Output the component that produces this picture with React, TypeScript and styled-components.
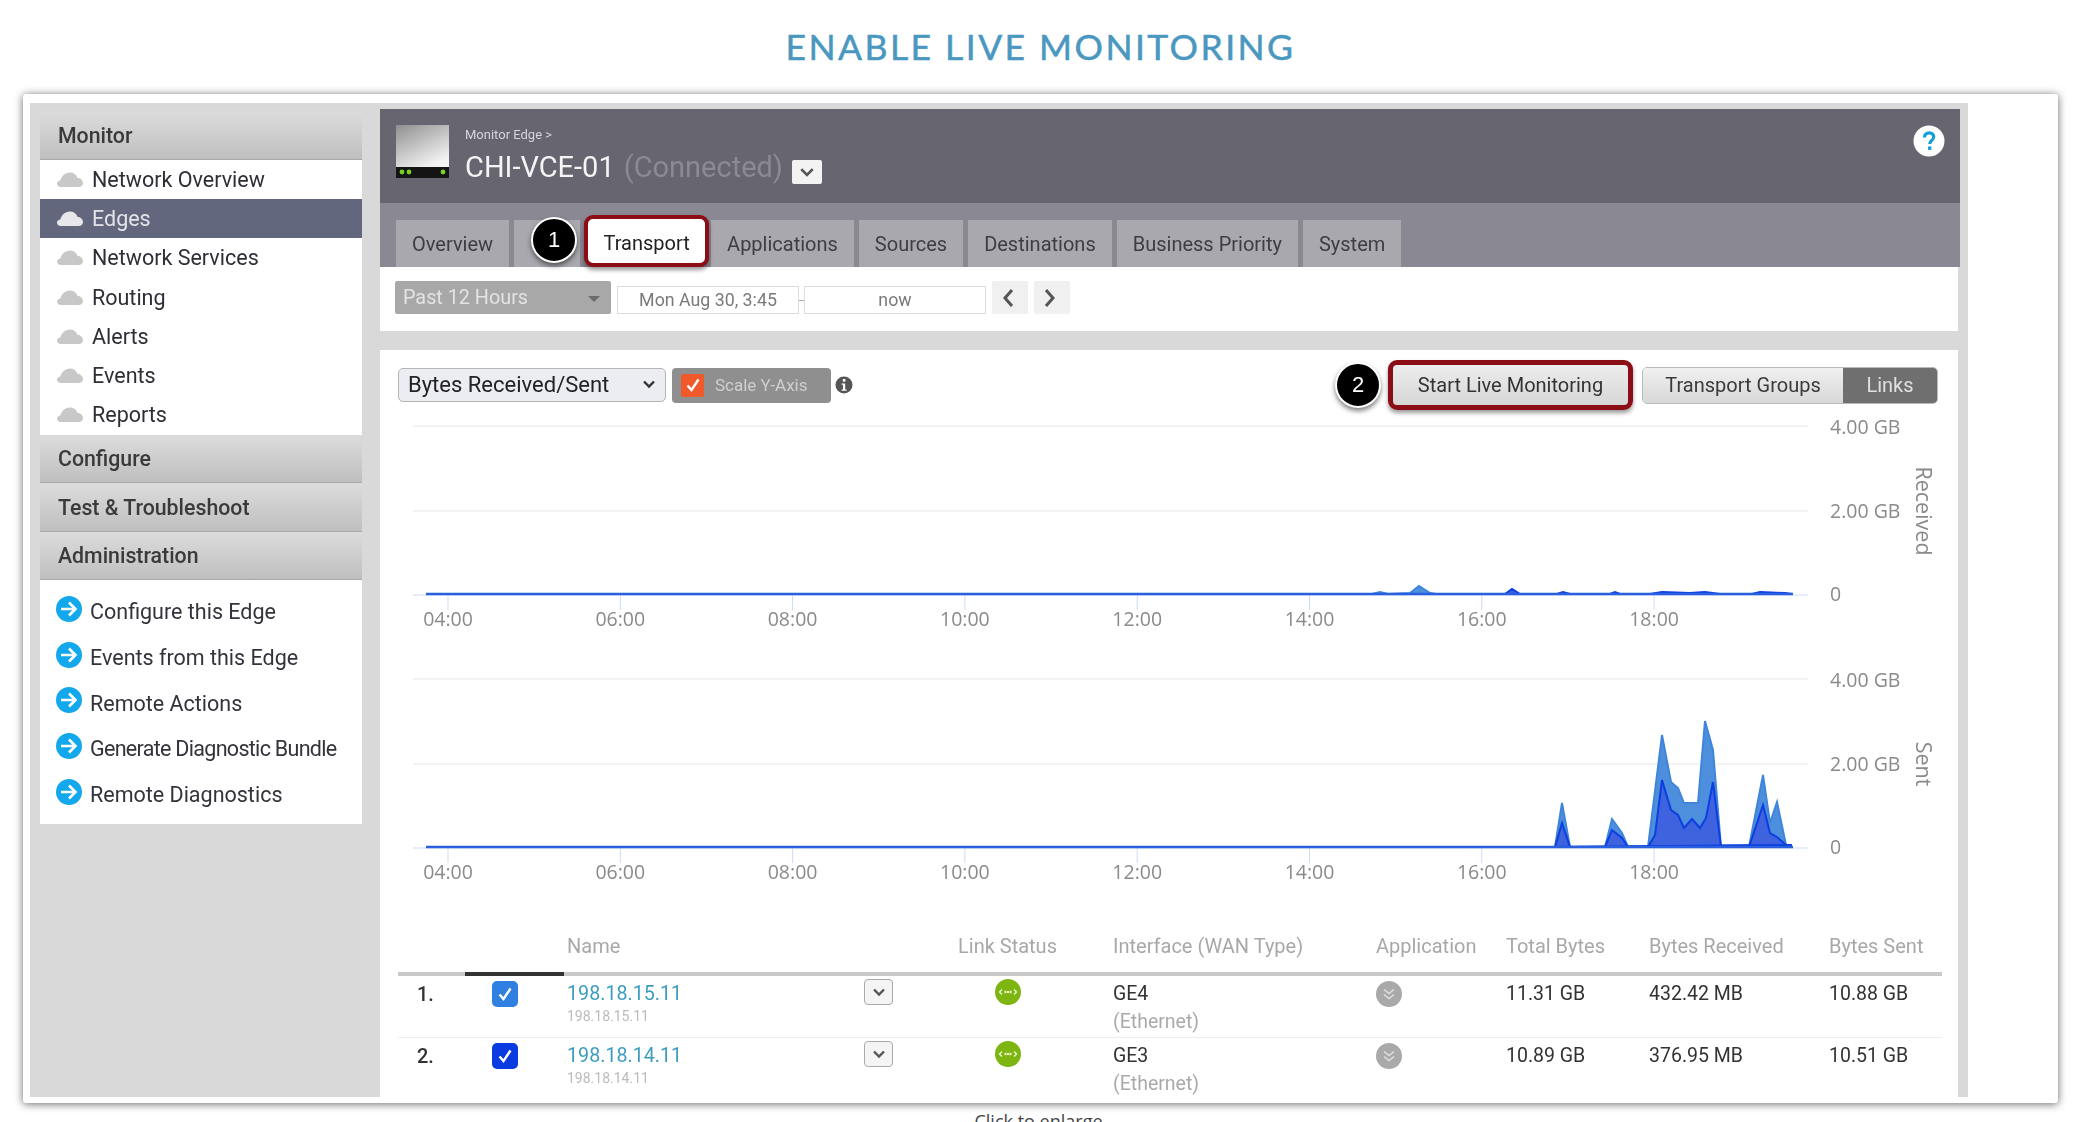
import styled, { createGlobalStyle } from "styled-components";

const GlobalStyle = createGlobalStyle`
  html, body {
    margin: 0;
    padding: 0;
    background: #ffffff;
  }
  * {
    box-sizing: border-box;
  }
`;

const monitorItems = ["Network Overview", "Edges", "Network Services", "Routing", "Alerts", "Events", "Reports"];
const adminLinks = ["Configure this Edge", "Events from this Edge", "Remote Actions", "Generate Diagnostic Bundle", "Remote Diagnostics"];
const tabs = ["Applications", "Sources", "Destinations", "Business Priority", "System"];
const hours = ["04:00", "06:00", "08:00", "10:00", "12:00", "14:00", "16:00", "18:00"];

const rows = [
  { no: "1.", ip: "198.18.15.11", iface: "GE4", total: "11.31 GB", received: "432.42 MB", sent: "10.88 GB", box: "#2f80e0" },
  { no: "2.", ip: "198.18.14.11", iface: "GE3", total: "10.89 GB", received: "376.95 MB", sent: "10.51 GB", box: "#0a3be0" },
];

// points read off the reference, as page coordinates
const sentLight: [number, number][] = [
  [1555, 847], [1562, 803], [1570, 847], [1605, 847], [1612, 819], [1622, 833], [1628, 847], [1648, 847],
  [1662, 735], [1671, 782], [1678, 788], [1684, 803], [1698, 803], [1705, 721], [1713, 750], [1721, 847],
  [1749, 847], [1763, 775], [1770, 823], [1777, 802], [1786, 845], [1792, 845],
];
const sentDark: [number, number][] = [
  [1555, 847], [1562, 823], [1570, 847], [1605, 847], [1612, 830], [1622, 838], [1628, 847], [1648, 847],
  [1655, 835], [1662, 780], [1671, 810], [1678, 815], [1684, 828], [1692, 819], [1700, 828], [1706, 818],
  [1713, 782], [1721, 847], [1749, 847], [1763, 805], [1770, 833], [1777, 837], [1786, 845], [1792, 845],
];
const receivedLight: [number, number][] = [
  [1372, 594], [1380, 592], [1388, 594], [1410, 593], [1419, 586], [1430, 593], [1436, 594], [1792, 594],
];
const receivedDark: [number, number][] = [
  [1505, 594], [1512, 589], [1520, 594], [1557, 594], [1563, 592], [1570, 594], [1610, 594], [1615, 592],
  [1620, 594], [1650, 594], [1662, 592], [1690, 593], [1705, 592], [1720, 594], [1752, 594], [1760, 592],
  [1785, 593], [1792, 594],
];

const toPoints = (pts: [number, number][]) => pts.map((p) => p.join(",")).join(" ");

function AreaChart(props: {
  top: number;
  height: number;
  lines: number[];
  base: number;
  label: string;
  light: [number, number][];
  dark: [number, number][];
}) {
  const { top, height, lines, base, label, light, dark } = props;
  const mid = lines[1];
  return (
    <ChartSvg width={1540} height={height} viewBox={`398 ${top} 1540 ${height}`}>
      {lines.map((y) => (
        <line key={y} x1={413} x2={1808} y1={y} y2={y} stroke="#efefef" strokeWidth={1.5} />
      ))}
      <line x1={413} x2={1808} y1={base + 1} y2={base + 1} stroke="#cfdcf5" strokeWidth={1} />
      {hours.map((h, i) => {
        const x = 448 + i * 172.3;
        return (
          <g key={h}>
            <line x1={x} x2={x} y1={base} y2={base + 16} stroke="#cddbf3" strokeWidth={1} />
            <text x={x} y={base + 32} textAnchor="middle" fontSize={19.5} fill="#8a8a8a">{h}</text>
          </g>
        );
      })}
      <text x={1830} y={lines[0] + 8} fontSize={19.5} fill="#8a8a8a">4.00 GB</text>
      <text x={1830} y={lines[1] + 7} fontSize={19.5} fill="#8a8a8a">2.00 GB</text>
      <text x={1830} y={base + 7} fontSize={19.5} fill="#8a8a8a">0</text>
      <text
        x={1916}
        y={mid}
        textAnchor="middle"
        fontSize={21.5}
        fill="#8a8a8a"
        transform={`rotate(90 1916 ${mid})`}
      >
        {label}
      </text>
      <polygon points={toPoints(light)} fill="#4d8fdc" stroke="#3f86da" strokeWidth={2} />
      <polygon points={toPoints(dark)} fill="#3f62de" stroke="#0b3fe0" strokeWidth={2} />
      <line x1={426} x2={1793} y1={base} y2={base} stroke="#2a5fe0" strokeWidth={2.5} />
    </ChartSvg>
  );
}

const CloudIcon = ({ color }: { color: string }) => (
  <svg width="26" height="15" viewBox="0 0 26 15">
    <path
      fill={color}
      d="M4 15C1.6 15 0 13.5 0 11.8 0 10 1.5 8.8 3.4 8.6 4 4.6 8 0.5 13 0.5c3.6 0 6.4 2 7.4 5.2 3 .3 5.6 2.4 5.6 5.2 0 2.4-2 4.1-4.4 4.1z"
    />
  </svg>
);

const ArrowCircle = () => (
  <svg width="26" height="26" viewBox="0 0 26 26">
    <circle cx="13" cy="13" r="13" fill="#13a8ec" />
    <path d="M5 13h14M13 6.5l6.5 6.5-6.5 6.5" fill="none" stroke="#ffffff" strokeWidth="2.6" />
  </svg>
);

const Chevron = ({ color = "#444", size = 14 }: { color?: string; size?: number }) => (
  <svg width={size} height={size} viewBox="0 0 14 14">
    <path d="M2 4.5l5 5 5-5" fill="none" stroke={color} strokeWidth="2.4" />
  </svg>
);

const CheckMark = ({ size = 18 }: { size?: number }) => (
  <svg width={size} height={size} viewBox="0 0 18 18">
    <path d="M3.5 9.5l4 4.5 7-10.5" fill="none" stroke="#ffffff" strokeWidth="2.4" />
  </svg>
);

const EdgeIcon = () => (
  <svg width="53" height="53" viewBox="0 0 53 53">
    <defs>
      <linearGradient id="edgeBody" x1="0" y1="0" x2="0.6" y2="1">
        <stop offset="0" stopColor="#8f8f8f" />
        <stop offset="1" stopColor="#f2f2f2" />
      </linearGradient>
    </defs>
    <rect width="53" height="42" fill="url(#edgeBody)" />
    <rect y="42" width="53" height="11" fill="#141414" />
    <circle cx="6" cy="47" r="2.4" fill="#76d321" />
    <circle cx="13" cy="47" r="2.4" fill="#76d321" />
    <circle cx="47" cy="47" r="2.4" fill="#76d321" />
  </svg>
);

const HelpIcon = () => (
  <svg width="32" height="32" viewBox="0 0 32 32">
    <circle cx="16" cy="16" r="15.5" fill="#ffffff" />
    <path
      d="M11.5 12.5c0-3 2-4.7 4.7-4.7s4.5 1.7 4.5 4.1c0 3.6-4 3.6-4 7"
      fill="none"
      stroke="#13a0d8"
      strokeWidth="3.2"
    />
    <rect x="15" y="21.5" width="3.4" height="3.4" fill="#13a0d8" />
  </svg>
);

const StatusIcon = () => (
  <svg width="26" height="26" viewBox="0 0 26 26">
    <circle cx="13" cy="13" r="13" fill="#7fb512" />
    <path d="M7 10.5L4.5 13 7 15.5M19 10.5l2.5 2.5-2.5 2.5" fill="none" stroke="#e8f5c8" strokeWidth="1.4" />
    <circle cx="10.5" cy="13" r="1.2" fill="#e8f5c8" />
    <circle cx="13" cy="13" r="1.2" fill="#e8f5c8" />
    <circle cx="15.5" cy="13" r="1.2" fill="#e8f5c8" />
  </svg>
);

const AppIcon = () => (
  <svg width="26" height="26" viewBox="0 0 26 26">
    <circle cx="13" cy="13" r="13" fill="#a9a9a9" />
    <path d="M8 8.5l5 4 5-4M8 13.5l5 4 5-4" fill="none" stroke="#e0e0e0" strokeWidth="1.6" />
  </svg>
);

const InfoIcon = () => (
  <svg width="18" height="18" viewBox="0 0 18 18">
    <circle cx="9" cy="9" r="8.5" fill="#555" />
    <rect x="7.8" y="3" width="2.6" height="2.6" fill="#fff" />
    <path d="M6.6 7.4h3.6v6h1.4v1.4H6.6v-1.4h1.4V8.8H6.6z" fill="#fff" />
  </svg>
);

export default function App() {
  return (
    <Page>
      <GlobalStyle />
      <Title>ENABLE LIVE MONITORING</Title>
      <Frame>
        <Shot>
          <Sidebar>
            <SideHead>Monitor</SideHead>
            <SideList>
              {monitorItems.map((item) => (
                <SideItem key={item} $active={item === "Edges"}>
                  <CloudIcon color={item === "Edges" ? "#e8e8ec" : "#c8c8c8"} />
                  {item}
                </SideItem>
              ))}
            </SideList>
            <SideHead>Configure</SideHead>
            <SideHead>Test &amp; Troubleshoot</SideHead>
            <SideHead>Administration</SideHead>
            <AdminList>
              {adminLinks.map((link) => (
                <AdminLink key={link} $tight={link.length > 22}>
                  <ArrowCircle />
                  <span>{link}</span>
                </AdminLink>
              ))}
            </AdminList>
          </Sidebar>

          <Main>
            <Header>
              <EdgeIcon />
              <HeaderText>
                <Crumb>Monitor Edge &gt;</Crumb>
                <EdgeName>
                  CHI-VCE-01 <Connected>(Connected)</Connected>
                  <HeaderDrop><Chevron color="#555" size={16} /></HeaderDrop>
                </EdgeName>
              </HeaderText>
              <HelpSlot><HelpIcon /></HelpSlot>
            </Header>

            <TabBar>
              <Tab>Overview</Tab>
              <BlankTab><Badge $left={17} $top={-3}>1</Badge></BlankTab>
              <ActiveTab>Transport</ActiveTab>
              {tabs.map((tab) => (
                <Tab key={tab}>{tab}</Tab>
              ))}
            </TabBar>

            <TimeBar>
              <RangeSelect>
                Past 12 Hours
                <SelectCaret />
              </RangeSelect>
              <DateField>Mon Aug 30, 3:45</DateField>
              <DateDash />
              <DateField>now</DateField>
              <NavButton>
                <svg width="14" height="20" viewBox="0 0 14 20"><path d="M11 2L4 10l7 8" fill="none" stroke="#555" strokeWidth="3" /></svg>
              </NavButton>
              <NavButton>
                <svg width="14" height="20" viewBox="0 0 14 20"><path d="M3 2l7 8-7 8" fill="none" stroke="#555" strokeWidth="3" /></svg>
              </NavButton>
            </TimeBar>

            <Panel>
              <Toolbar>
                <MetricSelect>
                  Bytes Received/Sent
                  <Chevron color="#333" />
                </MetricSelect>
                <ScaleToggle>
                  <ScaleBox><CheckMark /></ScaleBox>
                  Scale Y-Axis
                </ScaleToggle>
                <InfoIcon />
                <ToolbarRight>
                  <FlowBadge>2</FlowBadge>
                  <LiveButton>Start Live Monitoring</LiveButton>
                  <Segmented>
                    <Segment $w={200}>Transport Groups</Segment>
                    <Segment $w={94} $on>Links</Segment>
                  </Segmented>
                </ToolbarRight>
              </Toolbar>

              <AreaChart top={410} height={230} lines={[426, 511]} base={594} label="Received" light={receivedLight} dark={receivedDark} />
              <AreaChart top={640} height={256} lines={[679, 764]} base={847} label="Sent" light={sentLight} dark={sentDark} />

              <HeadRow>
                <span />
                <span />
                <span>Name</span>
                <span />
                <HeadStatus>Link Status</HeadStatus>
                <span>Interface (WAN Type)</span>
                <span>Application</span>
                <span>Total Bytes</span>
                <span>Bytes Received</span>
                <span>Bytes Sent</span>
                <HeadMark />
              </HeadRow>

              {rows.map((row, i) => (
                <DataRow key={row.ip} $last={i === rows.length - 1}>
                  <RowNo>{row.no}</RowNo>
                  <CheckCell>
                    <RowCheck $color={row.box}><CheckMark /></RowCheck>
                  </CheckCell>
                  <div>
                    <RowLink>{row.ip}</RowLink>
                    <RowSub>{row.ip}</RowSub>
                  </div>
                  <div>
                    <ExpandButton><Chevron color="#555" /></ExpandButton>
                  </div>
                  <StatusCell><StatusIcon /></StatusCell>
                  <div>
                    <Cell>{row.iface}</Cell>
                    <WanType>(Ethernet)</WanType>
                  </div>
                  <div><AppIcon /></div>
                  <Cell>{row.total}</Cell>
                  <Cell>{row.received}</Cell>
                  <Cell>{row.sent}</Cell>
                </DataRow>
              ))}
            </Panel>
          </Main>
        </Shot>
      </Frame>
      <Caption>Click to enlarge</Caption>
    </Page>
  );
}

const Page = styled.div`
  width: 2077px;
  height: 1122px;
  overflow: hidden;
  background: #ffffff;
  font-family: Roboto, "Liberation Sans", sans-serif;
`;

const Title = styled.h1`
  margin: 0;
  height: 94px;
  padding: 27px 0 0 4px;
  text-align: center;
  font-family: Lato, "Open Sans", sans-serif;
  font-size: 35.5px;
  line-height: 40px;
  font-weight: 400;
  letter-spacing: 2.45px;
  -webkit-text-stroke: 0.5px #4a97bf;
  color: #4a97bf;
`;

const Frame = styled.div`
  margin-left: 23px;
  width: 2035px;
  height: 1009px;
  padding: 9px 0 6px 7px;
  background: #ffffff;
  border-radius: 3px;
  box-shadow: 0 1px 8px rgba(0, 0, 0, 0.6);
`;

const Shot = styled.div`
  width: 1938px;
  height: 994px;
  padding: 6px 8px 0 10px;
  display: flex;
  gap: 18px;
  overflow: hidden;
  background: #d9d9d9;
  filter: blur(0.55px);
`;

const Sidebar = styled.aside`
  width: 322px;
  flex: none;
  margin-top: 2px;
  align-self: flex-start;
`;

const SideHead = styled.div`
  height: 48.5px;
  padding: 1px 0 0 18px;
  display: flex;
  align-items: center;
  font-size: 21.3px;
  font-weight: 500;
  color: #3a3a3a;
  background: linear-gradient(#dcdcdc, #bfbfbf);
  border-bottom: 1px solid #a9a9a9;
`;

const SideList = styled.div`
  background: #ffffff;
`;

const SideItem = styled.div<{ $active?: boolean }>`
  height: 39.3px;
  padding-left: 17px;
  display: flex;
  align-items: center;
  gap: 9px;
  font-size: 21.5px;
  color: ${(p) => (p.$active ? "#e3e4ea" : "#2e2e36")};
  background: ${(p) => (p.$active ? "#63677d" : "#ffffff")};
`;

const AdminList = styled.div`
  height: 244px;
  padding-top: 9px;
  background: #ffffff;
`;

const AdminLink = styled.div<{ $tight?: boolean }>`
  height: 45.7px;
  padding-left: 16px;
  display: flex;
  align-items: center;
  gap: 8px;
  font-size: 21.5px;
  letter-spacing: ${(p) => (p.$tight ? "-0.7px" : "0")};
  color: #33333b;

  svg {
    margin-top: -6px;
  }
`;

const Main = styled.main`
  width: 1580px;
  flex: none;
`;

const Header = styled.header`
  height: 94px;
  padding: 16px 15px 0 16px;
  display: flex;
  align-items: flex-start;
  background: #666570;
`;

const HeaderText = styled.div`
  margin-left: 16px;
  color: #f2f2f2;
`;

const Crumb = styled.div`
  font-size: 13px;
  line-height: 20px;
  color: #d5d5da;
`;

const EdgeName = styled.div`
  display: flex;
  align-items: center;
  gap: 9px;
  height: 44px;
  font-size: 29px;
  color: #f4f4f4;
`;

const Connected = styled.span`
  color: #8b8a93;
`;

const HeaderDrop = styled.span`
  width: 30px;
  height: 24px;
  margin-top: 9px;
  display: flex;
  align-items: center;
  justify-content: center;
  background: #f3f3f3;
  border-radius: 2px;
`;

const HelpSlot = styled.div`
  margin-left: auto;
`;

const TabBar = styled.nav`
  height: 64px;
  padding: 17px 0 0 16px;
  display: flex;
  align-items: flex-end;
  gap: 5px;
  background: #8a8993;
`;

const Tab = styled.div`
  height: 47px;
  padding: 0 16px;
  display: flex;
  align-items: center;
  font-size: 20px;
  color: #3d3d45;
  background: #a9a8ae;
`;

const BlankTab = styled.div`
  position: relative;
  width: 66px;
  height: 47px;
  background: #a9a8ae;
`;

const ActiveTab = styled.div`
  position: relative;
  z-index: 1;
  width: 125px;
  height: 52px;
  margin: 0 -3px 0 -1px;
  padding-top: 3px;
  display: flex;
  align-items: center;
  justify-content: center;
  font-size: 20px;
  color: #222222;
  background: #ffffff;
  border: 4px solid #8b0d16;
  border-radius: 9px;
  box-shadow: 0 3px 4px rgba(0, 0, 0, 0.4);
`;

const BadgeBase = styled.div`
  width: 46px;
  height: 46px;
  display: flex;
  align-items: center;
  justify-content: center;
  font-family: "Liberation Sans", sans-serif;
  font-size: 22px;
  color: #ffffff;
  background: #000000;
  border: 2px solid #ffffff;
  border-radius: 50%;
  box-shadow: 0 3px 5px rgba(0, 0, 0, 0.5);
`;

const Badge = styled(BadgeBase)<{ $left: number; $top: number }>`
  position: absolute;
  left: ${(p) => p.$left}px;
  top: ${(p) => p.$top}px;
`;

const FlowBadge = styled(BadgeBase)``;

const TimeBar = styled.div`
  height: 64px;
  margin-right: 2px;
  padding: 14px 0 0 15px;
  display: flex;
  align-items: flex-start;
  background: #ffffff;
`;

const RangeSelect = styled.div`
  position: relative;
  width: 216px;
  height: 33px;
  margin-right: 6px;
  padding-left: 8px;
  display: flex;
  align-items: center;
  font-size: 19.8px;
  color: #e3e3e3;
  background: #a8a8a8;
  border-radius: 2px;
`;

const SelectCaret = styled.span`
  position: absolute;
  right: 11px;
  top: 15px;
  border-left: 6px solid transparent;
  border-right: 6px solid transparent;
  border-top: 6px solid #6c6c6c;
`;

const DateField = styled.div`
  width: 182px;
  height: 28px;
  margin-top: 5px;
  padding-bottom: 2px;
  display: flex;
  align-items: center;
  justify-content: center;
  font-size: 17.8px;
  color: #7a7a7a;
  background: #ffffff;
  border: 1px solid #dddddd;
`;

const DateDash = styled.span`
  width: 5px;
  height: 1px;
  margin-top: 19px;
  background: #aaaaaa;
`;

const NavButton = styled.div`
  width: 36px;
  height: 33px;
  margin-left: 6px;
  padding-right: 4px;
  display: flex;
  align-items: center;
  justify-content: center;
  background: #f0f0f0;
  border-radius: 2px;
`;

const Panel = styled.section`
  height: 747px;
  margin-top: 19px;
  margin-right: 2px;
  padding: 17px 20px 0 18px;
  overflow: hidden;
  background: #ffffff;
`;

const Toolbar = styled.div`
  height: 36px;
  display: flex;
  align-items: center;
  margin-bottom: 7px;
`;

const MetricSelect = styled.div`
  width: 268px;
  height: 34px;
  padding: 0 9px 2px;
  display: flex;
  align-items: center;
  justify-content: space-between;
  font-size: 22px;
  color: #222222;
  background: #ecedf3;
  border: 1px solid #b4b4b4;
  border-radius: 5px;
`;

const ScaleToggle = styled.div`
  width: 159px;
  height: 35px;
  margin: 0 4px 0 6px;
  padding-left: 9px;
  display: flex;
  align-items: center;
  gap: 11px;
  font-size: 17px;
  color: #cfcfcf;
  background: #8f8f8f;
  border-radius: 4px;
`;

const ScaleBox = styled.span`
  width: 23px;
  height: 23px;
  display: flex;
  align-items: center;
  justify-content: center;
  background: #f0592a;
  border-radius: 2px;
`;

const ToolbarRight = styled.div`
  margin-left: auto;
  display: flex;
  align-items: center;
`;

const LiveButton = styled.div`
  width: 245px;
  height: 50px;
  margin: 0 9px 0 7px;
  display: flex;
  align-items: center;
  justify-content: center;
  font-size: 20px;
  color: #333333;
  background: linear-gradient(#ededed, #d6d6d6);
  border: 5px solid #8b0d16;
  border-radius: 9px;
  box-shadow: 0 3px 4px rgba(0, 0, 0, 0.4);
`;

const Segmented = styled.div`
  display: flex;
  height: 37px;
  border-radius: 5px;
  overflow: hidden;
  border: 1px solid #b9b9b9;
`;

const Segment = styled.div<{ $on?: boolean; $w: number }>`
  width: ${(p) => p.$w}px;
  display: flex;
  align-items: center;
  justify-content: center;
  font-size: 20px;
  color: ${(p) => (p.$on ? "#e0e0e0" : "#3a3a3a")};
  background: ${(p) => (p.$on ? "#6f6f6f" : "linear-gradient(#f0f0f0, #d8d8d8)")};
`;

const ChartSvg = styled.svg`
  display: block;
  font-family: "Open Sans", sans-serif;
`;

const rowColumns = "67px 102px 297px 94px 155px 263px 130px 143px 180px 109px";

const HeadRow = styled.div`
  position: relative;
  display: grid;
  grid-template-columns: ${rowColumns};
  height: 80px;
  margin-right: -4px;
  padding-bottom: 14px;
  align-items: end;
  font-size: 20px;
  color: #a8a8a8;
  border-bottom: 4px solid #c9c9c9;
`;

const HeadStatus = styled.span`
  white-space: nowrap;
`;

const HeadMark = styled.span`
  position: absolute;
  left: 67px;
  bottom: -4px;
  width: 99px;
  height: 4px;
  background: #333333;
`;

const DataRow = styled.div<{ $last?: boolean }>`
  display: grid;
  grid-template-columns: ${rowColumns};
  height: 62px;
  margin-right: -4px;
  padding-top: 5px;
  border-bottom: ${(p) => (p.$last ? "none" : "1px solid #eeeeee")};
`;

const RowNo = styled.div`
  padding: 1px 0 0 19px;
  font-size: 20px;
  font-weight: 500;
  color: #333333;
`;

const CheckCell = styled.div`
  padding-left: 27px;
`;

const RowCheck = styled.div<{ $color: string }>`
  width: 26px;
  height: 26px;
  display: flex;
  align-items: center;
  justify-content: center;
  background: ${(p) => p.$color};
  border-radius: 5px;
`;

const RowLink = styled.div`
  font-size: 19.7px;
  line-height: 26px;
  color: #3d9dbf;
`;

const RowSub = styled.div`
  font-size: 14px;
  line-height: 18px;
  color: #bbbbbb;
`;

const ExpandButton = styled.div`
  width: 29px;
  height: 26px;
  margin-top: -2px;
  display: flex;
  align-items: center;
  justify-content: center;
  background: #f4f4f4;
  border: 1px solid #aaaaaa;
  border-radius: 4px;
`;

const StatusCell = styled.div`
  margin-top: -2px;
  padding-left: 37px;
`;

const Cell = styled.div`
  font-size: 19.5px;
  line-height: 26px;
  color: #333333;
`;

const WanType = styled.div`
  font-size: 19.5px;
  line-height: 30px;
  color: #aaaaaa;
`;

const Caption = styled.div`
  margin-top: 6px;
  text-align: center;
  font-family: "Open Sans", sans-serif;
  font-size: 18px;
  color: #444444;
`;
